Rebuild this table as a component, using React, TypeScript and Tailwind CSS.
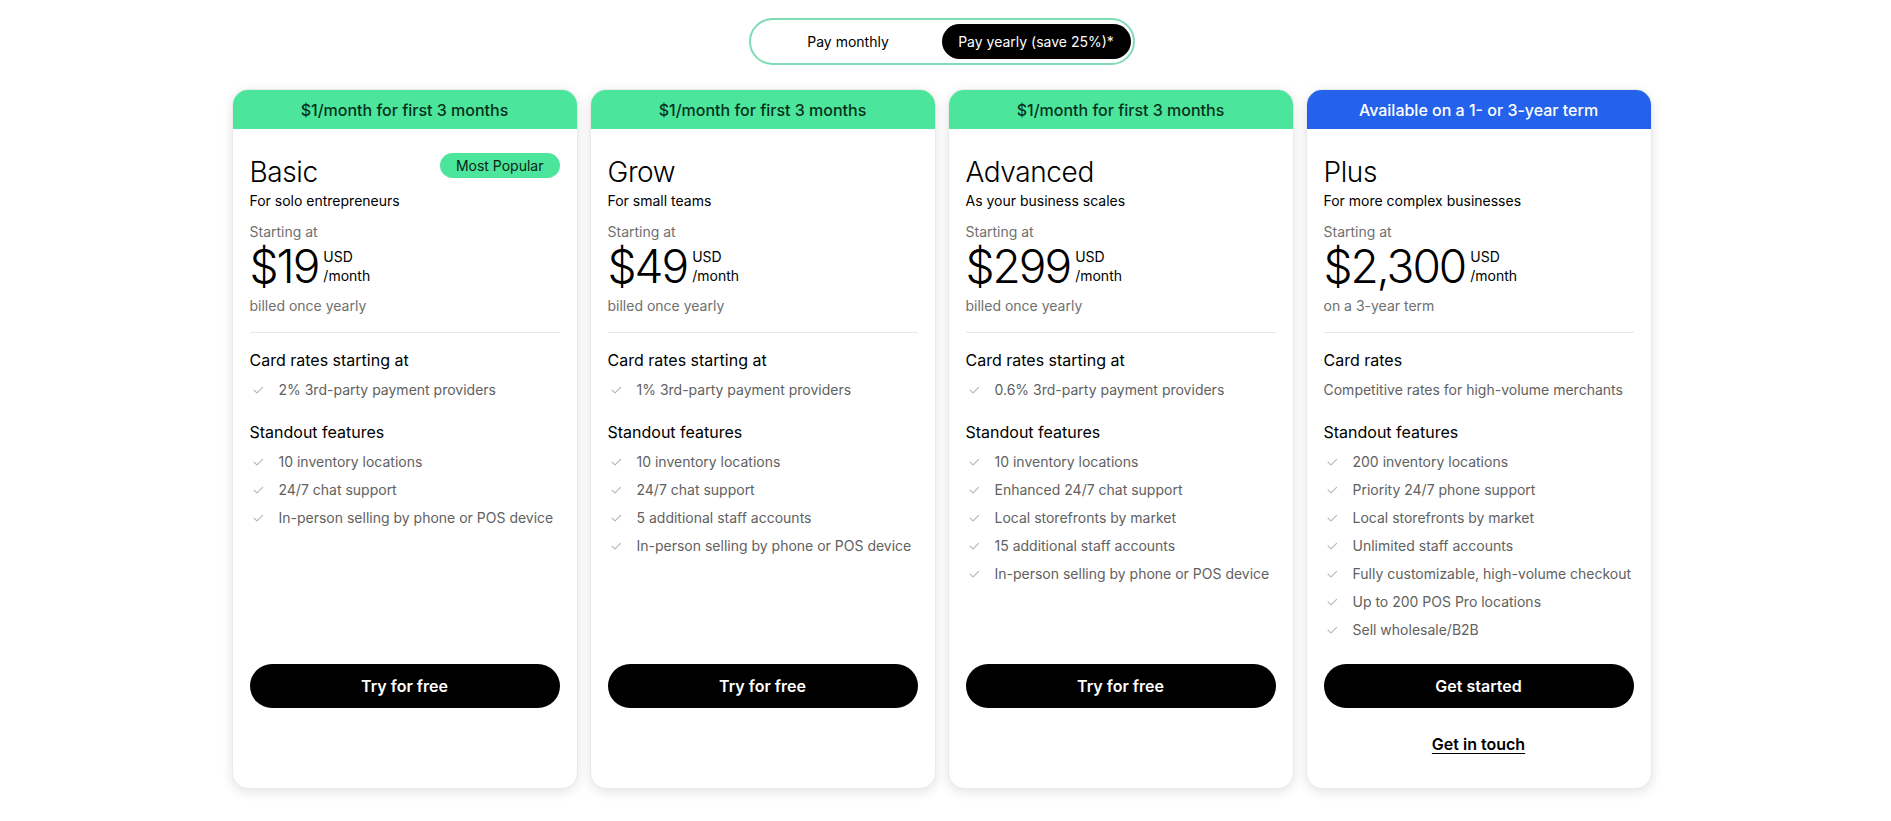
import { Fragment } from "react";

type Plan = {
  banner: string;
  bannerTone: "green" | "blue";
  name: string;
  tagline: string;
  price: string;
  note: string;
  popular?: boolean;
  ratesTitle: string;
  rates: string;
  ratesCheck: boolean;
  features: string[];
  cta: string;
  contact?: boolean;
};

const plans: Plan[] = [
  {
    banner: "$1/month for first 3 months",
    bannerTone: "green",
    name: "Basic",
    tagline: "For solo entrepreneurs",
    price: "$19",
    note: "billed once yearly",
    popular: true,
    ratesTitle: "Card rates starting at",
    rates: "2% 3rd-party payment providers",
    ratesCheck: true,
    features: ["10 inventory locations", "24/7 chat support", "In-person selling by phone or POS device"],
    cta: "Try for free",
  },
  {
    banner: "$1/month for first 3 months",
    bannerTone: "green",
    name: "Grow",
    tagline: "For small teams",
    price: "$49",
    note: "billed once yearly",
    ratesTitle: "Card rates starting at",
    rates: "1% 3rd-party payment providers",
    ratesCheck: true,
    features: [
      "10 inventory locations",
      "24/7 chat support",
      "5 additional staff accounts",
      "In-person selling by phone or POS device",
    ],
    cta: "Try for free",
  },
  {
    banner: "$1/month for first 3 months",
    bannerTone: "green",
    name: "Advanced",
    tagline: "As your business scales",
    price: "$299",
    note: "billed once yearly",
    ratesTitle: "Card rates starting at",
    rates: "0.6% 3rd-party payment providers",
    ratesCheck: true,
    features: [
      "10 inventory locations",
      "Enhanced 24/7 chat support",
      "Local storefronts by market",
      "15 additional staff accounts",
      "In-person selling by phone or POS device",
    ],
    cta: "Try for free",
  },
  {
    banner: "Available on a 1- or 3-year term",
    bannerTone: "blue",
    name: "Plus",
    tagline: "For more complex businesses",
    price: "$2,300",
    note: "on a 3-year term",
    ratesTitle: "Card rates",
    rates: "Competitive rates for high-volume merchants",
    ratesCheck: false,
    features: [
      "200 inventory locations",
      "Priority 24/7 phone support",
      "Local storefronts by market",
      "Unlimited staff accounts",
      "Fully customizable, high-volume checkout",
      "Up to 200 POS Pro locations",
      "Sell wholesale/B2B",
    ],
    cta: "Get started",
    contact: true,
  },
];

function Check() {
  return (
    <svg width="16" height="16" viewBox="0 0 16 16" fill="none" className="shrink-0">
      <path d="M4 8.2l3 2.6 5.6-5.4" stroke="#b5b5b5" strokeWidth="1.1" strokeLinecap="round" strokeLinejoin="round" />
    </svg>
  );
}

function Item({ text, check = true }: { text: string; check?: boolean }) {
  return (
    <li className="flex items-center gap-[13px] text-[14px] leading-[20px] text-[#616161]">
      {check && <Check />}
      <span>{text}</span>
    </li>
  );
}

function PlanCard({ plan }: { plan: Plan }) {
  return (
    <div className="flex flex-col rounded-[16px] bg-white shadow-[0_3px_12px_rgba(0,0,0,0.11)] border border-[#e9e9e9] overflow-hidden">
      <div
        className={
          plan.bannerTone === "green"
            ? "h-[39px] flex items-center justify-center bg-[#4be59b] text-[#07311d] text-[16px] font-medium"
            : "h-[39px] flex items-center justify-center bg-[#2462ec] text-white text-[16px] font-medium"
        }
      >
        {plan.banner}
      </div>

      <div className="flex flex-col flex-1 px-[17px] pt-[26px] pb-[32px]">
        <div className="flex items-start justify-between">
          <h2 className="text-[28px] leading-[34px] font-light text-black tracking-[-0.4px]">{plan.name}</h2>
          {plan.popular && (
            <span className="-mt-[2px] h-[25px] px-[16px] flex items-center rounded-full bg-[#4be59b] text-[14px] text-[#0a1f14]">
              Most Popular
            </span>
          )}
        </div>
        <p className="mt-[2px] text-[14px] leading-[20px] text-black">{plan.tagline}</p>
        <p className="mt-[11px] text-[14px] leading-[20px] text-[#6f6f6f]">Starting at</p>
        <div className="mt-[1px] flex items-start gap-[5px]">
          <span className="text-[46px] leading-[46px] font-light text-black tracking-[-2px]">{plan.price}</span>
          <div className="mt-[4px] flex flex-col text-[14px] leading-[19px] text-black">
            <span>USD</span>
            <span>/month</span>
          </div>
        </div>
        <p className="mt-[7px] text-[14px] leading-[20px] text-[#6f6f6f]">{plan.note}</p>

        <div className="mt-[16px] h-px bg-[#e6e6e6]" />

        <h3 className="mt-[15px] text-[16px] leading-[24px] text-black">{plan.ratesTitle}</h3>
        <ul className="mt-[8px]">
          <Item text={plan.rates} check={plan.ratesCheck} />
        </ul>

        <h3 className="mt-[20px] text-[16px] leading-[24px] text-black">Standout features</h3>
        <ul className="mt-[8px] flex flex-col gap-[8px] flex-1">
          {plan.features.map((f) => (
            <Fragment key={f}>
              <Item text={f} />
            </Fragment>
          ))}
        </ul>

        <button className="mt-[24px] h-[44px] w-full rounded-full bg-black text-white text-[16px] font-semibold">
          {plan.cta}
        </button>
        <div className="mt-[24px] h-[24px] flex justify-center">
          {plan.contact && (
            <a className="text-[16px] leading-[24px] font-semibold text-black underline underline-offset-[3px] decoration-1">
              Get in touch
            </a>
          )}
        </div>
      </div>
    </div>
  );
}

export default function App() {
  return (
    <div className="min-h-screen bg-white pt-[18px] pb-[30px] pr-[8px] font-['Inter','Liberation_Sans',sans-serif]">
      <div className="flex justify-center">
        <div className="flex items-center w-[386px] h-[47px] rounded-full border-2 border-[#7fdcb4] p-[4px] pr-[2px]">
          <button className="flex-1 h-full rounded-full text-[14px] text-black">Pay monthly</button>
          <button className="w-[189px] h-full rounded-full bg-black text-[14px] text-white">Pay yearly (save 25%)*</button>
        </div>
      </div>

      <div className="mt-[24px] mx-auto w-[1420px] grid grid-cols-4 gap-[12px]">
        {plans.map((p) => (
          <PlanCard key={p.name} plan={p} />
        ))}
      </div>
    </div>
  );
}
